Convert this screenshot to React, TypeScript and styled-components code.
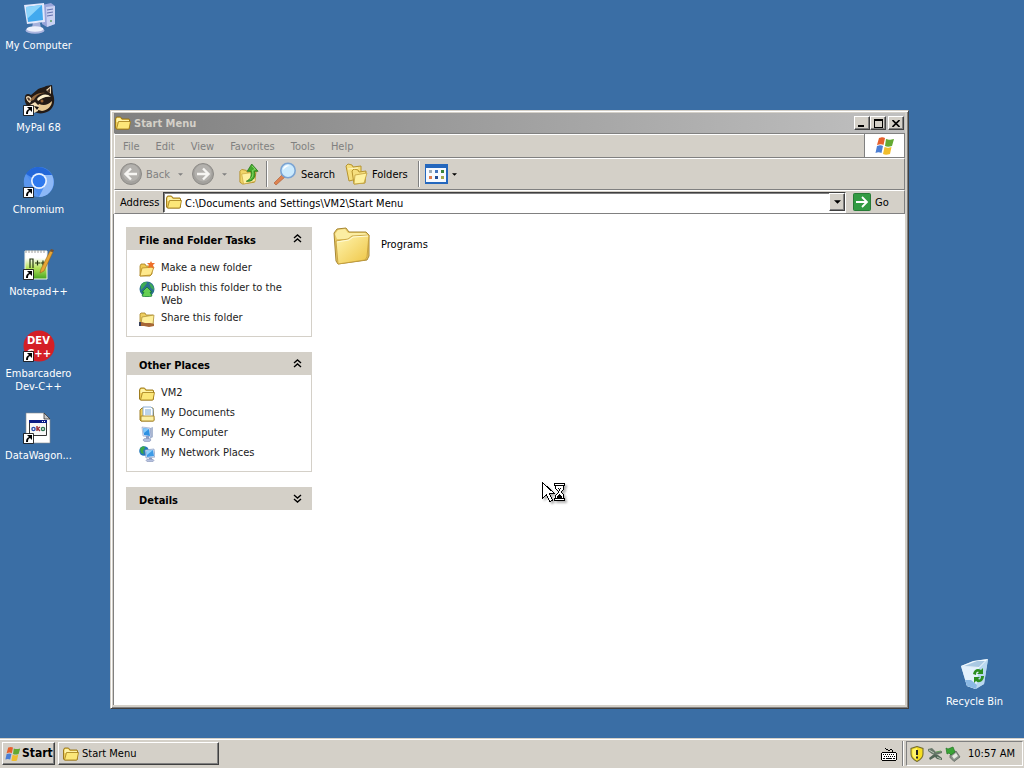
import React from "react";
import styled, { createGlobalStyle, css } from "styled-components";

const GlobalStyle = createGlobalStyle`
    * {
        box-sizing: border-box;
    }

    body {
        margin: 0;
        background: #3a6ea5;
    }

    body, button, input {
        font-family: Tahoma, "DejaVu Sans Condensed", "DejaVu Sans", sans-serif;
        font-size: 11px;
        line-height: 13px;
        color: #000;
    }

    button {
        padding: 0;
        border: none;
        background: none;
    }

    svg {
        display: block;
        flex: none;
    }
`;

const raised = css`
    border: 1px solid;
    border-color: #fff #404040 #404040 #fff;
    box-shadow: inset -1px -1px #808080;
    background: #d4d0c8;
`;

const Screen = styled.div`
    display: flex;
    flex-direction: column;
    min-height: 100vh;
`;

const Desktop = styled.main`
    position: relative;
    flex: 1;
    display: flex;
    justify-content: space-between;
    overflow: hidden;
`;

const IconColumn = styled.div<{ $bottom?: boolean }>`
    display: flex;
    flex-direction: column;
    justify-content: ${props => props.$bottom ? "flex-end" : "flex-start"};
    padding: ${props => props.$bottom ? "0 11px 0 0" : "0"};
`;

const Shortcut = styled.button`
    display: flex;
    flex-direction: column;
    align-items: center;
    gap: 5px;
    width: 77px;
    height: 82px;
    padding-top: 2px;
    color: #fff;
`;

const Window = styled.section`
    position: absolute;
    top: 110px;
    left: 110px;
    right: 115px;
    bottom: 29px;
    display: flex;
    flex-direction: column;
    padding: 2px;
    border: 1px solid;
    border-color: #d4d0c8 #404040 #404040 #d4d0c8;
    box-shadow: inset 1px 1px #fff, inset -1px -1px #808080;
    background: #d4d0c8;
`;

const TitleBar = styled.header`
    display: flex;
    align-items: center;
    height: 20px;
    margin: 0 1px;
    padding: 0 1px;
    background: linear-gradient(to right, #808080, #c0c0c0);
`;

const Title = styled.h1`
    flex: 1;
    margin: 0;
    padding-left: 3px;
    font-size: 11px;
    color: #d4d0c8;
`;

const Caption = styled.button<{ $spaced?: boolean }>`
    ${raised}
    display: flex;
    align-items: center;
    justify-content: center;
    width: 16px;
    height: 14px;
    margin-left: ${props => props.$spaced ? "2px" : "0"};
`;

const Bar = styled.div<{ $height: number }>`
    display: flex;
    align-items: center;
    height: ${props => props.$height}px;
    margin: 0 1px;
    border: 1px solid;
    border-color: #fff #808080 #808080 #fff;
`;

const MenuBar = styled(Bar)`
    border-top: 1px solid #808080;
    box-shadow: inset 0 1px #fff;
`;

const Menu = styled.nav`
    display: flex;
    flex: 1;
    gap: 16px;
    padding: 1px 0 0 8px;
`;

const MenuItem = styled.button`
    color: #808080;
`;

const Throbber = styled.div`
    display: flex;
    align-items: center;
    justify-content: center;
    width: 40px;
    height: 23px;
    border-left: 1px solid #808080;
    background: #fff;
`;

const ToolButton = styled.button<{ $width: number; $dim?: boolean }>`
    display: flex;
    align-items: center;
    gap: 4px;
    width: ${props => props.$width}px;
    color: ${props => props.$dim ? "#808080" : "#000"};
`;

const Separator = styled.div`
    width: 2px;
    height: 26px;
    margin-right: 5px;
    border-left: 1px solid #808080;
    border-right: 1px solid #fff;
`;

const ToolBar = styled(Bar)`
    padding-left: 5px;
`;

const AddressBar = styled(Bar)`
    padding: 0 2px 0 5px;
`;

const AddressLabel = styled.label`
    width: 43px;
`;

const AddressBox = styled.div`
    display: flex;
    align-items: center;
    flex: 1;
    height: 21px;
    padding-left: 2px;
    border: 1px solid;
    border-color: #404040 #fff #fff #404040;
    box-shadow: inset 1px 1px #808080;
    background: #fff;
`;

const AddressInput = styled.input`
    flex: 1;
    min-width: 0;
    padding: 2px 0 0 3px;
    border: none;
    outline: none;
    background: transparent;
`;

const DropButton = styled.button`
    ${raised}
    display: flex;
    align-items: center;
    justify-content: center;
    width: 16px;
    height: 18px;
`;

const GoButton = styled.button`
    display: flex;
    align-items: center;
    gap: 4px;
    width: 56px;
    padding-left: 7px;
`;

const Client = styled.div`
    display: flex;
    flex: 1;
    gap: 21px;
    padding: 13px 12px;
    margin: 0 1px 1px 0;
    border-left: 1px solid #808080;
    background: #fff;
`;

const TaskPane = styled.aside`
    display: flex;
    flex-direction: column;
    gap: 15px;
    width: 186px;
`;

const PanelHeader = styled.button`
    display: flex;
    align-items: center;
    justify-content: space-between;
    width: 100%;
    height: 23px;
    padding: 3px 10px 0 13px;
    background: #d4d0c8;
    font-weight: bold;

    svg {
        margin-bottom: 3px;
    }
`;

const PanelBody = styled.div`
    display: flex;
    flex-direction: column;
    gap: 4px;
    padding: 11px 12px 9px;
    border: 1px solid #d4d0c8;
    border-top: none;
`;

const TaskLink = styled.a`
    display: flex;
    gap: 6px;
    min-height: 16px;
    color: #1c1c1c;
    text-decoration: none;
`;

const FileItem = styled.button`
    display: flex;
    align-items: center;
    align-self: flex-start;
    gap: 10px;
    height: 38px;

    span {
        padding-bottom: 4px;
    }
`;

const Pointer = styled.div`
    position: absolute;
    left: 542px;
    top: 482px;
    filter: drop-shadow(2px 2px 1px rgba(0, 0, 0, 0.3));
`;

const TaskBar = styled.footer`
    display: flex;
    align-items: center;
    height: 30px;
    padding: 0 1px 0 2px;
    border-top: 1px solid #d4d0c8;
    box-shadow: inset 0 1px #fff;
    background: #d4d0c8;
`;

const StartButton = styled.button`
    ${raised}
    display: flex;
    align-items: center;
    gap: 1px;
    width: 53px;
    height: 23px;
    padding-left: 2px;
    font-size: 12px;
    font-weight: bold;
`;

const WindowButton = styled.button`
    ${raised}
    display: flex;
    align-items: center;
    gap: 3px;
    width: 161px;
    height: 23px;
    margin: 0 auto 0 3px;
    padding-left: 4px;
`;

const TrayDivider = styled.div`
    width: 2px;
    height: 25px;
    margin: 0 2px 0 5px;
    border-left: 1px solid #808080;
    border-right: 1px solid #fff;
`;

const Tray = styled.div`
    display: flex;
    align-items: center;
    gap: 2px;
    height: 25px;
    padding: 0 7px 0 2px;
    border: 1px solid;
    border-color: #808080 #fff #fff #808080;
`;

const Clock = styled.time`
    padding-left: 5px;
`;

function ShortcutArrow() {
    return <g>
        <path d="M.5 21.500h10v10H.5z" fill="#fff" stroke="#000" strokeWidth=".8" />
        <path d="M3 30c0-3 1-4 3-5l-2-2h5v5l-2-2c-2 1-2 2-2 4z" fill="#000" />
    </g>;
}

function ComputerIcon() {
    return <svg width="32" height="32" viewBox="0 0 32 32">
        <path d="M19 3l9-2 4 3v18l-8 3-5-3z" fill="#98a5da" />
        <path d="M23 5l9-1v18l-8 3z" fill="#c9d1f2" />
        <path d="M24 8l6-1M24 11l6-1M24 14l6-1" stroke="#6372ae" strokeWidth="1.2" />
        <circle cx="28" cy="19" r="1" fill="#5d9d60" />
        <path d="M10 20l7 1 1 5H9z" fill="#a5b1dc" />
        <ellipse cx="12" cy="28.500" rx="9.500" ry="3.200" fill="#aab5df" />
        <ellipse cx="12" cy="27" rx="8.500" ry="2.800" fill="#edf0fb" />
        <path d="M1 3l20-2 1 19-18 2z" fill="#e4e9fb" />
        <path d="M3 5l16-2 1 15-15 2z" fill="#41a9ee" />
        <path d="M3 5l16-2L4 17z" fill="#8cd4fb" />
    </svg>;
}

function RaccoonIcon() {
    return <svg width="32" height="32" viewBox="0 0 32 32">
        <path d="M2 13c0-3 3-4 6-2l6-5c3-3 7-2 9-4l6-1 1 9c2 5 2 13-4 17-7 4-15 3-19-3C3 22 1 17 2 13z" fill="#241b16" />
        <path d="M3 13c2-2 4-1 6 2l-2 4c-2-1-4-3-4-6zM23 6l5-4v8z" fill="#f0dcb8" />
        <path d="M24 7l3-3v5z" fill="#51392a" />
        <path d="M4 14c2-1 3 0 3 2l-1 1z" fill="#51392a" />
        <path d="M7 17c2-5 8-9 15-8-5 0-9 3-11 7z" fill="#94693f" />
        <path d="M14 15c4-5 10-6 14-2-5-1-9 1-13 4z" fill="#fff1ce" />
        <path d="M16 20c5 2 9 1 13-3 0 5-4 9-10 10l-7-2z" fill="#e8c993" />
        <path d="M7 21l5-3 4 4-1 5-4 2z" fill="#f4dfb8" />
        <circle cx="19" cy="17" r="1.500" fill="#9a6435" />
        <path d="M11 22l5 1-2 3z" fill="#15100e" />
        <ShortcutArrow />
    </svg>;
}

function ChromiumIcon() {
    return <svg width="32" height="32" viewBox="0 0 32 32">
        <circle cx="16" cy="16" r="15" fill="#4b8df0" />
        <path d="M16 16L3 8c6-10 20-9 26 1H16z" fill="#2367d8" />
        <path d="M16 9h13c5 10-2 22-13 22l6-12z" fill="#8db8f7" />
        <path d="M3 8l8 13 5 10C4 31-3 18 3 8z" fill="#5995ed" />
        <circle cx="16" cy="15" r="8" fill="#e9f2ff" />
        <circle cx="16" cy="15" r="6.3" fill="#2f79ee" />
        <ShortcutArrow />
    </svg>;
}

function NotepadIcon() {
    return <svg width="32" height="32" viewBox="0 0 32 32">
        <defs>
            <linearGradient id="note" x1="0" y1="0" x2="0" y2="1">
                <stop offset=".25" stopColor="#fff" />
                <stop offset=".6" stopColor="#b7e35a" />
                <stop offset="1" stopColor="#45a51f" />
            </linearGradient>
        </defs>
        <path d="M2 3h22v28H2z" fill="url(#note)" stroke="#f4f4e8" />
        <path d="M3 2v3M6 2v3M9 2v3M12 2v3M15 2v3M18 2v3M21 2v3" stroke="#888" strokeWidth=".8" />
        <path d="M7 20V11h3v9M12 15h5M14.500 12.500v5M17.500 15h5M20 12.500v5" stroke="#263713" strokeWidth="1.2" fill="none" />
        <path d="M17 25l1-4L27 3l3 1-9 19z" fill="#e7a635" stroke="#9a6419" strokeWidth=".6" />
        <path d="M27 3l1-2 3 1-1 2z" fill="#77522f" />
        <ShortcutArrow />
    </svg>;
}

function DevIcon() {
    return <svg width="32" height="32" viewBox="0 0 32 32">
        <circle cx="16" cy="16" r="15.500" fill="#d41f26" />
        <g fill="#fff" fontFamily="DejaVu Sans" fontWeight="bold" fontSize="10">
            <text x="4" y="14">DEV</text>
            <text x="4" y="27">C++</text>
        </g>
        <ShortcutArrow />
    </svg>;
}

function BatchIcon() {
    return <svg width="32" height="32" viewBox="0 0 32 32">
        <path d="M3 1h18l6 6v24H3z" fill="#fff" stroke="#8a8a8a" strokeWidth=".6" />
        <path d="M21 1v6h6z" fill="#c9c9c9" stroke="#333" strokeWidth=".8" />
        <path d="M6.500 8.500h17v15h-17z" fill="#f8f8f8" stroke="#333" />
        <path d="M6 8h18v3H6z" fill="#0a1c86" />
        <path d="M19 9.500h1M21 9.500h1" stroke="#fff" />
        <circle cx="10.500" cy="17" r="1.600" fill="none" stroke="#2b4fae" strokeWidth="1.400" />
        <path d="M14 14v5M14 17l3-2M15 17l2 2" stroke="#9a2d35" strokeWidth="1.400" />
        <circle cx="20" cy="17" r="1.600" fill="none" stroke="#2b7350" strokeWidth="1.400" />
        <ShortcutArrow />
    </svg>;
}

function RecycleIcon() {
    return <svg width="32" height="32" viewBox="0 0 32 32">
        <path d="M2 8l12-5 15-2-4 25-9 5-8-3z" fill="#c9dff1" />
        <path d="M2 8l13-5 14-2-8 9z" fill="#f3f9fd" />
        <path d="M5 8l13-5 8 0-6 6z" fill="#a9c8e2" />
        <path d="M2 8l18 2-3 21-9-3z" fill="#e3f1fc" />
        <path d="M29 1l-9 9-3 21 8-5z" fill="#b9d7ef" />
        <path d="M6 22l6 0 6 5-1 4-9-3z" fill="#8bb9e4" />
        <path d="M14 16c1-5 5-6 8-4l2-2v6h-6l2-2c-2-1-3 0-3 3zM25 18c0 5-5 8-8 5l-2 2v-6h6l-2 2c2 1 3 0 3-3z" fill="#2c8f20" />
    </svg>;
}

function FolderIcon() {
    return <svg width="16" height="16" viewBox="0 0 16 16">
        <path d="M.5 4l1-2h4l1.500 2h7l.5 1v8l-1 1H1.500l-1-1z" fill="#efce5c" stroke="#94700f" strokeWidth=".9" />
        <path d="M1.500 4.500l.5-1.500h3l1.500 2h7.500v2H1.500z" fill="#fff3a6" />
        <path d="M3.500 6.500h12l-1.500 7.500H1.500z" fill="#fce778" stroke="#a17b17" strokeWidth=".8" />
    </svg>;
}

function BigFolderIcon() {
    return <svg width="38" height="38" viewBox="0 0 38 38">
        <defs>
            <linearGradient id="folder" x1="0" y1="0" x2="1" y2="1">
                <stop stopColor="#fff5b0" />
                <stop offset="1" stopColor="#eec544" />
            </linearGradient>
        </defs>
        <path d="M1 6l3-4 9-1 3 4 17 0 3 3v21l-2 4L5 37l-2-3z" fill="#e9ca65" stroke="#a68734" />
        <path d="M2 7l3-4 7-1 3 4 17 0 3 2-1 4H4z" fill="#fbeda2" />
        <path d="M3 14l12-2 4-3 17-1-2 22-2 3L5 37z" fill="url(#folder)" stroke="#c19b39" strokeWidth=".8" />
        <path d="M4 15l12-2 4-3 15-1" stroke="#fffbd8" fill="none" />
    </svg>;
}

function FlagIcon({ size = 20 }: { size?: number }) {
    return <svg width={size} height={size} viewBox="0 0 20 20">
        <path d="M4 2c3-1 4-1 6 0L8.500 9C7 8 5 8 2 9z" fill="#e5602c" />
        <path d="M11 3c3 1 4 1 8 0l-2 7c-3 1-5 1-7 0z" fill="#63a932" />
        <path d="M2 10c3-1 4-1 6 0l-1.500 7c-2-1-4-1-6 0z" fill="#4b7ed4" />
        <path d="M9.500 11c3 1 4 1 7 0L15 18c-3 1-5 1-7 0z" fill="#f0bd2d" />
    </svg>;
}

function CircleArrow({ flip }: { flip?: boolean }) {
    return <svg width="22" height="22" viewBox="0 0 22 22">
        <circle cx="11" cy="11" r="10.500" fill="#a3a19d" stroke="#8d8b87" />
        <circle cx="11" cy="10" r="8.500" fill="#b3b1ad" />
        <path transform={flip ? "translate(22) scale(-1 1)" : undefined} d="M17 11H6M11 5.500L5.500 11l5.500 5.500" fill="none" stroke="#f6f5f2" strokeWidth="2.400" />
    </svg>;
}

function DownArrow({ color = "#000", wide }: { color?: string; wide?: boolean }) {
    return <svg width={wide ? 7 : 5} height={wide ? 4 : 3} viewBox="0 0 6 3">
        <path d="M0 0h6L3 3z" fill={color} />
    </svg>;
}

function UpFolderIcon() {
    return <svg width="20" height="22" viewBox="0 0 22 24">
        <path d="M1 9l2-2 5 1 1 2 10-2-2 13-13 2-3-2z" fill="#f1d568" stroke="#b28e28" />
        <path d="M3 12l14-2 1 10-13 3z" fill="#fff0a0" stroke="#c5a23b" strokeWidth=".7" />
        <path d="M8 20c5-2 6-6 5-11H9l5-8 7 8h-4c2 7-2 12-9 11z" fill="#42aa2d" stroke="#227115" strokeWidth=".8" />
        <path d="M14 3l4 4-3 1c1 5 0 8-3 10" fill="none" stroke="#93df71" />
    </svg>;
}

function SearchIcon() {
    return <svg width="24" height="24" viewBox="0 0 24 24">
        <path d="M9 13L1 21l2 2 9-8z" fill="#dd8350" stroke="#a95732" strokeWidth=".6" />
        <circle cx="15" cy="8.500" r="7.200" fill="#cbeafd" stroke="#7ba4d3" strokeWidth="1.600" />
        <path d="M10 8c0-4 4-6 7-4-3 0-5 2-7 4z" fill="#fff" />
    </svg>;
}

function FoldersIcon() {
    return <svg width="23" height="22" viewBox="0 0 23 22">
        <path d="M1 3l2-2 4 1 1 2 8-1v12L4 18z" fill="#f6df7d" stroke="#b6942f" />
        <path d="M7 8l2-2 4 1 1 2 7-1-1 12-11 1z" fill="#f6df7d" stroke="#b6942f" />
        <path d="M10 12l12-2-3 10-10 1z" fill="#fff2a0" stroke="#c3a13d" strokeWidth=".8" />
        <path d="M3 6l10-1" stroke="#fff8c7" />
    </svg>;
}

function ViewsIcon() {
    return <svg width="23" height="20" viewBox="0 0 23 20" shapeRendering="crispEdges">
        <path d="M0 0h23v20H0z" fill="#2467bd" />
        <path d="M1 4h20v14H1z" fill="#f7faff" />
        <path d="M4 6h3v3H4z" fill="#9cabb9" />
        <path d="M10 6h3v3h-3z" fill="#4474bd" />
        <path d="M16 6h3v3h-3z" fill="#388337" />
        <path d="M4 12h3v3H4z" fill="#df7a4b" />
        <path d="M10 12h3v3h-3z" fill="#244c95" />
        <path d="M16 12h3v3h-3z" fill="#a2a94c" />
    </svg>;
}

function GoIcon() {
    return <svg width="18" height="18" viewBox="0 0 18 18">
        <rect x=".5" y=".5" width="17" height="17" rx="1" fill="#329b43" stroke="#277b36" />
        <path d="M3 9h11M9 4l5 5-5 5" fill="none" stroke="#fff" strokeWidth="1.800" />
    </svg>;
}

function Chevrons({ down }: { down?: boolean }) {
    return <svg width="9" height="9" viewBox="0 0 9 9">
        <path transform={down ? "translate(0 9) scale(1 -1)" : undefined} d="M1 4l3.500-3L8 4M1 8l3.500-3L8 8" fill="none" stroke="#000" strokeWidth="1.400" />
    </svg>;
}

function NewFolderIcon() {
    return <svg width="16" height="16" viewBox="0 0 16 16">
        <path d="M1 5l1-2h4l1 2h6v8l-2 2H1z" fill="#efc952" stroke="#a67e20" strokeWidth=".8" />
        <path d="M3 7l12-1-3 8-11 1z" fill="#ffe98c" stroke="#b58c25" strokeWidth=".8" />
        <path d="M12 0l1 2 3 0-2 2 1 4-3-2-3 1 1-3-2-2 3 0z" fill="#ed6f2a" />
    </svg>;
}

function PublishIcon() {
    return <svg width="16" height="16" viewBox="0 0 16 16">
        <circle cx="8" cy="8" r="7.500" fill="#2c7090" />
        <path d="M2 4c3-4 6-3 6-2L5 6l-3 3zM10 2c4 1 5 5 5 7l-3-2z" fill="#3fac55" />
        <path d="M8 6l5 5h-2l2 4c-3 1-7 1-10 0l2-4H3z" fill="#66cf53" stroke="#137832" strokeWidth=".8" />
    </svg>;
}

function ShareIcon() {
    return <svg width="16" height="16" viewBox="0 0 16 16">
        <path d="M1 3l1-1h4l1 2h7v9H1z" fill="#efcf60" stroke="#a58025" strokeWidth=".8" />
        <path d="M3 6l12-2-1 9H2z" fill="#fff09b" stroke="#a88930" strokeWidth=".7" />
        <path d="M0 11h3l3 1h5l4 1v2l-5 1-5-1H0z" fill="#a76736" />
        <path d="M0 11h2v4H0z" fill="#39415d" />
    </svg>;
}

function DocumentsIcon() {
    return <svg width="16" height="16" viewBox="0 0 16 16">
        <path d="M1 4l2-2h11l1 12-1 1H2l-1-1z" fill="#efce5c" stroke="#94700f" strokeWidth=".9" />
        <path d="M4 1h8l2 2v9H4z" fill="#fff" stroke="#6f9acb" strokeWidth=".8" />
        <path d="M6 4h6M6 6h6M6 8h6" stroke="#79a9d5" />
        <path d="M2 10h13v5H2z" fill="#fcf0a5" stroke="#a17b17" strokeWidth=".8" />
    </svg>;
}

function MonitorIcon() {
    return <svg width="16" height="16" viewBox="0 0 16 16">
        <path d="M11 2l3-1v10l-3 2z" fill="#acb9d2" />
        <path d="M3 1l8 1 1 9-8-1z" fill="#dce5f7" stroke="#899bc4" strokeWidth=".6" />
        <path d="M4 2l6 1 1 7-6-1z" fill="#2f91e2" />
        <path d="M4 2l6 1-5 4z" fill="#84c9fa" />
        <path d="M7 10h3v3H7z" fill="#8e9dc6" />
        <ellipse cx="8" cy="14" rx="4" ry="1.700" fill="#b4c0df" stroke="#7c89ab" strokeWidth=".5" />
    </svg>;
}

function NetworkIcon() {
    return <svg width="16" height="16" viewBox="0 0 16 16">
        <circle cx="5" cy="5" r="4.800" fill="#2478b9" />
        <path d="M1 3c2-4 5-3 5-1L4 5l1 3-3-1z" fill="#3ca849" />
        <path d="M6 4l9-1 1 8-9 1z" fill="#dce5f7" stroke="#7189b6" strokeWidth=".6" />
        <path d="M7 5l7-1 1 6-7 1z" fill="#3e9be6" />
        <path d="M7 5l7-1-6 5z" fill="#93d3fb" />
        <path d="M10 12h3v2h-3z" fill="#8e9dc6" />
        <ellipse cx="11" cy="14.500" rx="4" ry="1.400" fill="#b4c0df" stroke="#7c89ab" strokeWidth=".5" />
    </svg>;
}

function KeyboardIcon() {
    return <svg width="16" height="14" viewBox="0 0 16 14" shapeRendering="crispEdges">
        <path d="M4 1h1v1H4zM5 2h2v1H5zM7 3h2v1H7zM9 2h2v1H9zM11 3h1v2h-1zM1 5h14v1H1zM0 6h1v7H0zM15 6h1v7h-1zM1 13h14v1H1z" />
        <path d="M1 6h14v7H1z" fill="#fff" />
        <path d="M2 7.500h12M3 9.500h11" stroke="#000" strokeDasharray="1 1" />
        <path d="M2 11h2v1H2zM5 11h6v1H5zM12 11h2v1h-2z" />
    </svg>;
}

function ShieldIcon() {
    return <svg width="16" height="16" viewBox="0 0 16 16">
        <path d="M8 .5l6 2V8c0 4-3 6-6 7.500C5 14 2 12 2 8V2.500z" fill="#f7df20" stroke="#756d31" strokeWidth="1.100" />
        <path d="M8 2l-4.500 1.500V8c0 3 2 4.500 4.500 6z" fill="#fff56e" />
        <path d="M7 4h2v5H7zM7 10.500h2v2H7z" fill="#222" />
    </svg>;
}

function ConnectorIcon() {
    return <svg width="16" height="16" viewBox="0 0 16 16">
        <path d="M1 3l4-1 4 4 6-1v2L9 9 5 8 1 5z" fill="#68786a" />
        <path d="M2 12l5-4 4 1 4 3v2l-5-1-2-2-5 3z" fill="#526758" />
        <path d="M2 4l5 3M10 11l4 2" stroke="#b8c7b5" />
        <path d="M9 6l5-1" stroke="#64a35a" />
    </svg>;
}

function EjectIcon() {
    return <svg width="16" height="16" viewBox="0 0 16 16">
        <path d="M5 9l6-4 4 6-6 4.500-4-4z" fill="#8b928b" stroke="#555d55" strokeWidth=".7" />
        <path d="M7 10l4-3 2 3-4 3z" fill="#e5e8df" />
        <path d="M2 8L1 2l2 1 5-2 2 5-4 3-2-2z" fill="#3aa436" stroke="#217622" strokeWidth=".7" />
    </svg>;
}

function BusyPointer() {
    return <svg width="24" height="22" viewBox="0 0 24 22" shapeRendering="crispEdges">
        <path d="M.5 .5v16l4-4 3 7 3-1-3-7h5z" fill="#fff" stroke="#000" />
        <path d="M12 1h11v3h-1v3l-3 3 3 3v3h1v3H12v-3h1v-3l3-3-3-3V4h-1z" fill="#000" />
        <path d="M13 2h9v1h-9zM13 17h9v1h-9zM14 4h7v3l-3 3 3 3v3h-7v-3l3-3-3-3z" fill="#fff" />
        <path d="M16 6h1v1h1V6h1v1h-1v2h-1V7h-1zM17 12h1v1h1v1h1v2h-5v-2h1v-1h1z" />
    </svg>;
}

const shortcuts = [
    { label: "My Computer", icon: <ComputerIcon /> },
    { label: "MyPal 68", icon: <RaccoonIcon /> },
    { label: "Chromium", icon: <ChromiumIcon /> },
    { label: "Notepad++", icon: <NotepadIcon /> },
    { label: "Embarcadero Dev-C++", icon: <DevIcon /> },
    { label: "DataWagon...", icon: <BatchIcon /> },
];

const fileTasks = [
    { label: "Make a new folder", icon: <NewFolderIcon /> },
    { label: "Publish this folder to the Web", icon: <PublishIcon /> },
    { label: "Share this folder", icon: <ShareIcon /> },
];

const places = [
    { label: "VM2", icon: <FolderIcon /> },
    { label: "My Documents", icon: <DocumentsIcon /> },
    { label: "My Computer", icon: <MonitorIcon /> },
    { label: "My Network Places", icon: <NetworkIcon /> },
];

interface PanelProps {
    title: string;
    items?: { label: string; icon: React.ReactNode }[];
}

function Panel({ title, items }: PanelProps) {
    return <div>
        <PanelHeader aria-expanded={!!items}>
            {title}
            <Chevrons down={!items} />
        </PanelHeader>
        {items && <PanelBody>
            {items.map(item =>
                <TaskLink key={item.label} href="#">
                    {item.icon}
                    <span>{item.label}</span>
                </TaskLink>
            )}
        </PanelBody>}
    </div>;
}

function ExplorerWindow() {
    return <Window>
        <TitleBar>
            <FolderIcon />
            <Title>Start Menu</Title>
            <Caption aria-label="Minimize">
                <svg width="8" height="8"><path d="M0 6h6v2H0z" /></svg>
            </Caption>
            <Caption aria-label="Maximize">
                <svg width="9" height="9"><path d="M0 0h9v9H0zM1 2v6h7V2z" fillRule="evenodd" /></svg>
            </Caption>
            <Caption aria-label="Close" $spaced>
                <svg width="8" height="7"><path d="M.5 0L7.500 7M7.500 0L.5 7" stroke="#000" strokeWidth="1.600" /></svg>
            </Caption>
        </TitleBar>
        <MenuBar $height={25}>
            <Menu>
                {["File", "Edit", "View", "Favorites", "Tools", "Help"].map(name =>
                    <MenuItem key={name}>{name}</MenuItem>
                )}
            </Menu>
            <Throbber><FlagIcon /></Throbber>
        </MenuBar>
        <ToolBar $height={32}>
            <ToolButton $width={58} $dim><CircleArrow />Back</ToolButton>
            <ToolButton $width={14} aria-label="Back history"><DownArrow color="#808080" /></ToolButton>
            <ToolButton $width={30} aria-label="Forward"><CircleArrow flip /></ToolButton>
            <ToolButton $width={17} aria-label="Forward history"><DownArrow color="#808080" /></ToolButton>
            <ToolButton $width={27} aria-label="Up"><UpFolderIcon /></ToolButton>
            <Separator />
            <ToolButton $width={72}><SearchIcon />Search</ToolButton>
            <ToolButton $width={73}><FoldersIcon />Folders</ToolButton>
            <Separator />
            <ToolButton $width={32} aria-label="Views"><ViewsIcon /><DownArrow /></ToolButton>
        </ToolBar>
        <AddressBar $height={24}>
            <AddressLabel htmlFor="address">Address</AddressLabel>
            <AddressBox>
                <FolderIcon />
                <AddressInput id="address" defaultValue="C:\Documents and Settings\VM2\Start Menu" />
                <DropButton aria-label="Show addresses"><DownArrow wide /></DropButton>
            </AddressBox>
            <GoButton><GoIcon />Go</GoButton>
        </AddressBar>
        <Client>
            <TaskPane>
                <Panel title="File and Folder Tasks" items={fileTasks} />
                <Panel title="Other Places" items={places} />
                <Panel title="Details" />
            </TaskPane>
            <FileItem><BigFolderIcon /><span>Programs</span></FileItem>
        </Client>
    </Window>;
}

export default function App() {
    return <Screen>
        <GlobalStyle />
        <Desktop>
            <IconColumn>
                {shortcuts.map(item =>
                    <Shortcut key={item.label}>{item.icon}{item.label}</Shortcut>
                )}
            </IconColumn>
            <IconColumn $bottom>
                <Shortcut><RecycleIcon />Recycle Bin</Shortcut>
            </IconColumn>
            <ExplorerWindow />
            <Pointer><BusyPointer /></Pointer>
        </Desktop>
        <TaskBar>
            <StartButton><FlagIcon size={16} />Start</StartButton>
            <WindowButton><FolderIcon />Start Menu</WindowButton>
            <KeyboardIcon />
            <TrayDivider />
            <Tray>
                <ShieldIcon />
                <ConnectorIcon />
                <EjectIcon />
                <Clock>10:57 AM</Clock>
            </Tray>
        </TaskBar>
    </Screen>;
}
